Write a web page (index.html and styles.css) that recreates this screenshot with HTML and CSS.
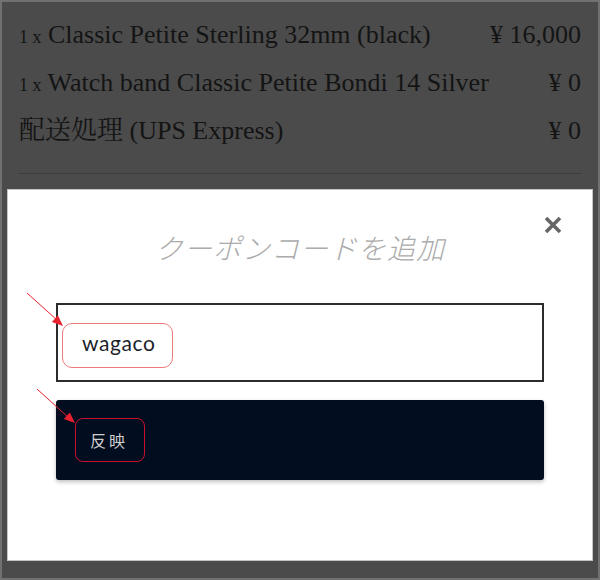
FILE: index.html
```html
<!DOCTYPE html>
<html lang="ja">
  <head>
    <meta charset="UTF-8" />
    <meta name="viewport" content="width=device-width, initial-scale=1.0" />
    <title>クーポンコードを追加</title>
    <link rel="stylesheet" href="styles.css">
  </head>
  <body>
    <div class="frame">
      <ul class="order">
        <li class="order-row">
          <span class="item"><span class="qty">1 x</span> Classic Petite Sterling 32mm (black)</span>
          <span class="price">¥ 16,000</span>
        </li>
        <li class="order-row">
          <span class="item"><span class="qty">1 x</span> Watch band Classic Petite Bondi 14 Silver</span>
          <span class="price">¥ 0</span>
        </li>
        <li class="order-row">
          <span class="item">配送処理 (UPS Express)</span>
          <span class="price">¥ 0</span>
        </li>
      </ul>
      <hr class="divider" />

      <div class="modal">
        <div class="modal-header">
          <h2 class="modal-title">クーポンコードを追加</h2>
          <button type="button" class="close" aria-label="閉じる">
            <svg width="20" height="20" viewBox="0 0 20 20">
              <path d="M3 3L17 17M17 3L3 17" stroke="#666" stroke-width="3.6" stroke-linecap="butt" />
            </svg>
          </button>
        </div>
        <form class="coupon-form">
          <input type="text" class="coupon-input" value="wagaco" />
          <button type="button" class="apply">反映</button>
        </form>
      </div>

      <!-- annotation marks -->
      <span class="mark mark-input"></span>
      <span class="mark mark-button"></span>
      <svg class="arrows" width="600" height="580" viewBox="0 0 600 580">
        <line x1="27" y1="293" x2="57" y2="320" stroke="#e8212f" stroke-width="1" />
        <polygon points="63,326 51.9,321.9 57.9,315.3" fill="#e8212f" />
        <line x1="37" y1="389" x2="69" y2="418" stroke="#e8212f" stroke-width="1" />
        <polygon points="75,423 63.8,419 69.8,412.4" fill="#e8212f" />
      </svg>
    </div>
  </body>
</html>
```

FILE: styles.css
```css
* {
  margin: 0;
  padding: 0;
  box-sizing: border-box;
}
body {
  margin: 0;
  background-color: #4b4b4b;
}
.frame {
  position: relative;
  width: 600px;
  height: 580px;
  border: 2px solid #717171;
  background-color: #4b4b4b;
  overflow: hidden;
}
.order {
  list-style: none;
  padding: 9px 17px 0 17px;
}
.order-row {
  display: flex;
  justify-content: space-between;
  align-items: baseline;
  height: 48px;
  line-height: 48px;
  font-family: "Liberation Serif", "Noto Serif CJK JP", "Noto Sans CJK JP", serif;
  font-size: 26px;
  color: #141414;
  white-space: nowrap;
}
.qty {
  font-size: 18px;
}
.divider {
  border: none;
  border-top: 1px solid #3e3e3e;
  margin: 18px 16px 0 16px;
}
.modal {
  position: relative;
  margin: 15px 5px 0 5px;
  height: 372px;
  background-color: #fff;
  border: 1px solid #c4c4c4;
  padding: 0 48px;
}
.modal-header {
  height: 113px;
  padding-top: 37px;
  text-align: center;
}
.modal-title {
  font-family: "Noto Sans CJK JP", sans-serif;
  font-size: 28px;
  font-weight: 300;
  font-style: italic;
  letter-spacing: 1px;
  line-height: 40px;
  color: #ababab;
}
.close {
  position: absolute;
  top: 25px;
  right: 29px;
  width: 20px;
  height: 20px;
  border: none;
  background: none;
  cursor: pointer;
}
.close svg {
  display: block;
}
.coupon-form {
  display: flex;
  flex-direction: column;
  gap: 18px;
}
.coupon-input {
  width: 488px;
  height: 79px;
  border: 2px solid #2c2c2c;
  padding: 0 24px;
  font-family: Lato, "Noto Sans", sans-serif;
  font-size: 21px;
  letter-spacing: 0.6px;
  color: #1c1f2b;
  outline: none;
}
.apply {
  width: 488px;
  height: 80px;
  border: none;
  border-radius: 3px;
  background-color: #020d1f;
  box-shadow: 0 2px 4px rgba(0, 0, 0, 0.25);
  padding-left: 34px;
  text-align: left;
  font-family: "Noto Sans CJK JP", sans-serif;
  font-size: 16px;
  letter-spacing: 3px;
  color: #cfcfcf;
  cursor: pointer;
}
.mark {
  position: absolute;
  border-radius: 10px;
  pointer-events: none;
}
.mark-input {
  left: 60px;
  top: 321px;
  width: 111px;
  height: 45px;
  border: 1px solid #ec7a7a;
}
.mark-button {
  left: 73px;
  top: 416px;
  width: 70px;
  height: 44px;
  border: 1px solid #c8102e;
  border-radius: 8px;
}
.arrows {
  position: absolute;
  left: -2px;
  top: -2px;
  pointer-events: none;
}
```
